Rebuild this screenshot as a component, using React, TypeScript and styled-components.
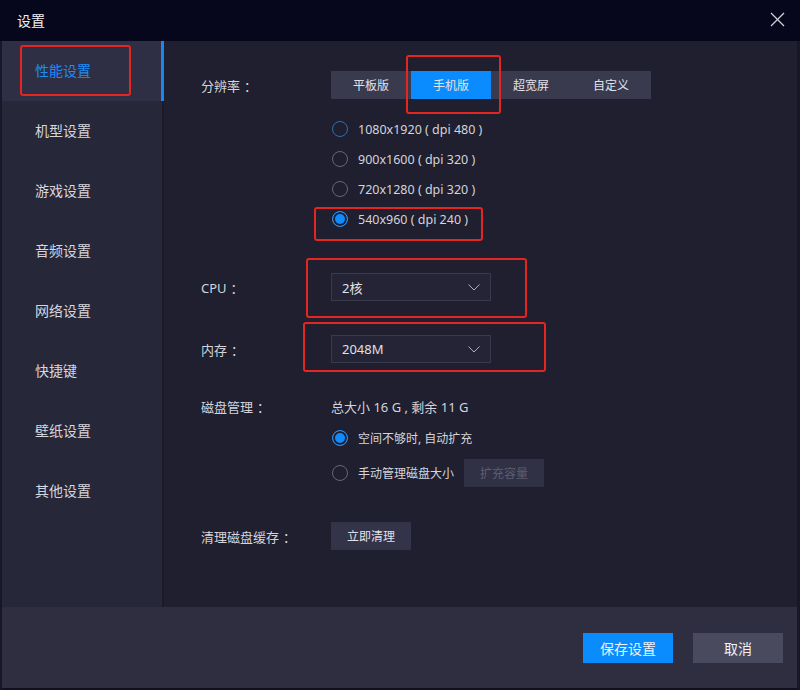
import React, { useState } from 'react';
import styled, { createGlobalStyle } from 'styled-components';

const GlobalStyle = createGlobalStyle`
  html, body {
    margin: 0;
    padding: 0;
    background: #06061c;
  }
  * {
    box-sizing: border-box;
  }
  body {
    font-family: "Noto Sans", "Noto Sans CJK SC", sans-serif;
  }
`;

const Window = styled.div`
  position: relative;
  width: 800px;
  height: 690px;
  display: flex;
  flex-direction: column;
  background: #06061c;
  overflow: hidden;
`;

const TitleBar = styled.div`
  height: 41px;
  flex: none;
  display: flex;
  align-items: center;
  justify-content: space-between;
  padding: 0 14px 2px 17px;
  color: #f0f0f4;
  font-size: 14px;
`;

const CloseButton = styled.button`
  width: 18px;
  height: 18px;
  padding: 0;
  border: none;
  background: transparent;
  display: flex;
  align-items: center;
  justify-content: center;
  cursor: pointer;
`;

const Body = styled.div`
  flex: 1;
  display: flex;
  min-height: 0;
  border-left: 2px solid #17172a;
  border-right: 3px solid #17172a;
`;

const Sidebar = styled.nav`
  width: 162px;
  flex: none;
  display: flex;
  flex-direction: column;
  background: #27273a;
  border-right: 2px solid #1a1a2a;
`;

const NavItem = styled.div<{ $active?: boolean }>`
  height: 60px;
  display: flex;
  align-items: center;
  padding: 0 0 3px 33px;
  font-size: 14px;
  margin-right: ${(p) => (p.$active ? '-2px' : '0')};
  color: ${(p) => (p.$active ? '#1d8cf8' : '#d6d6de')};
  background: ${(p) => (p.$active ? '#2e2e44' : 'transparent')};
  border-right: 3px solid ${(p) => (p.$active ? '#1a86f0' : 'transparent')};
  cursor: pointer;
`;

const Main = styled.main`
  flex: 1;
  background: #1f1f2f;
  padding: 30px 0 0 37px;
  display: flex;
  flex-direction: column;
  color: #d4d4dc;
  font-size: 13px;
`;

const Row = styled.div<{ $top?: number; $height?: number }>`
  display: flex;
  align-items: center;
  margin-top: ${(p) => p.$top ?? 0}px;
  min-height: ${(p) => p.$height ?? 28}px;
`;

const Label = styled.div`
  width: 130px;
  flex: none;
  font-size: 13px;
  color: #d4d4dc;
`;

const Colon = styled.span`
  margin-left: 4px;
`;

const Indent = styled.div`
  width: 130px;
  flex: none;
`;

const Segmented = styled.div`
  display: flex;
  height: 28px;
  background: #3a3a4e;
`;

const Segment = styled.button<{ $active?: boolean }>`
  width: 80px;
  height: 28px;
  border: none;
  padding: 0;
  font-family: inherit;
  font-size: 12px;
  color: #e2e2ea;
  background: ${(p) => (p.$active ? '#0a8cff' : 'transparent')};
  cursor: pointer;
`;

const RadioList = styled.div`
  display: flex;
  flex-direction: column;
  margin-top: 15px;
`;

const RadioRow = styled.label`
  display: flex;
  align-items: center;
  height: 30px;
  font-size: 12.5px;
  color: #d4d4dc;
  cursor: pointer;
`;

const RadioDot = styled.span<{ $checked?: boolean; $focus?: boolean }>`
  width: 16px;
  height: 16px;
  margin: 0 10px 0 1px;
  border-radius: 50%;
  flex: none;
  border: 1px solid
    ${(p) => (p.$checked ? '#2a90f4' : p.$focus ? '#2f6fae' : '#66667a')};
  background: ${(p) => (p.$checked ? '#0f8bff' : 'transparent')};
  box-shadow: ${(p) => (p.$checked ? 'inset 0 0 0 2px #1f1f2f' : 'none')};
`;

const CjkText = styled.span`
  font-size: 12px;
`;

const Select = styled.div`
  width: 160px;
  height: 28px;
  display: flex;
  align-items: center;
  justify-content: space-between;
  padding: 0 10px 0 10px;
  background: #242436;
  border: 1px solid #39394c;
  font-size: 13px;
  color: #e0e0e8;
`;

const Info = styled.div`
  font-size: 13px;
  color: #d4d4dc;
`;

const GhostButton = styled.button<{ $disabled?: boolean }>`
  width: 80px;
  height: 28px;
  margin-left: ${(p) => (p.$disabled ? '10px' : '0')};
  border: none;
  padding: 0;
  font-family: inherit;
  font-size: 12px;
  background: ${(p) => (p.$disabled ? '#313145' : '#333349')};
  color: ${(p) => (p.$disabled ? '#5e5e72' : '#e0e0e8')};
  cursor: ${(p) => (p.$disabled ? 'default' : 'pointer')};
`;

const Footer = styled.footer`
  height: 83px;
  flex: none;
  display: flex;
  align-items: center;
  justify-content: flex-end;
  gap: 20px;
  padding: 0 14px 0 0;
  background: #2e2e40;
  border-left: 2px solid #17172a;
  border-right: 3px solid #17172a;
  border-bottom: 2px solid #101020;
`;

const FooterButton = styled.button<{ $primary?: boolean }>`
  width: 90px;
  height: 30px;
  border: none;
  font-family: inherit;
  font-size: 14px;
  color: #f0f0f6;
  background: ${(p) => (p.$primary ? '#0a8cff' : '#4a4a5e')};
  cursor: pointer;
`;

const Mark = styled.div<{ $x: number; $y: number; $w: number; $h: number }>`
  position: absolute;
  left: ${(p) => p.$x}px;
  top: ${(p) => p.$y}px;
  width: ${(p) => p.$w}px;
  height: ${(p) => p.$h}px;
  border: 2px solid #e5251f;
  border-radius: 3px;
  pointer-events: none;
`;

const Chevron = () => (
  <svg width="12" height="7" viewBox="0 0 12 7">
    <polyline points="0.5,0.5 6,6 11.5,0.5" fill="none" stroke="#b0b0bc" strokeWidth="1" />
  </svg>
);

const CloseIcon = () => (
  <svg width="15" height="15" viewBox="0 0 15 15">
    <line x1="1" y1="1" x2="14" y2="14" stroke="#d0d0d8" strokeWidth="1.2" />
    <line x1="14" y1="1" x2="1" y2="14" stroke="#d0d0d8" strokeWidth="1.2" />
  </svg>
);

const navItems = ['性能设置', '机型设置', '游戏设置', '音频设置', '网络设置', '快捷键', '壁纸设置', '其他设置'];
const modes = ['平板版', '手机版', '超宽屏', '自定义'];
const resolutions = [
  '1080x1920 ( dpi 480 )',
  '900x1600 ( dpi 320 )',
  '720x1280 ( dpi 320 )',
  '540x960 ( dpi 240 )',
];

const App: React.FC = () => {
  const [mode, setMode] = useState(1);
  const [resolution, setResolution] = useState(3);
  const [auto, setAuto] = useState(true);

  return (
    <>
      <GlobalStyle />
      <Window>
        <TitleBar>
          <span>设置</span>
          <CloseButton>
            <CloseIcon />
          </CloseButton>
        </TitleBar>
        <Body>
          <Sidebar>
            {navItems.map((item, i) => (
              <NavItem key={item} $active={i === 0}>
                {item}
              </NavItem>
            ))}
          </Sidebar>
          <Main>
            <Row>
              <Label>
                分辨率<Colon>：</Colon>
              </Label>
              <Segmented>
                {modes.map((m, i) => (
                  <Segment key={m} $active={i === mode} onClick={() => setMode(i)}>
                    {m}
                  </Segment>
                ))}
              </Segmented>
            </Row>
            <RadioList>
              {resolutions.map((r, i) => (
                <Row key={r} $height={30}>
                  <Indent />
                  <RadioRow onClick={() => setResolution(i)}>
                    <RadioDot $checked={i === resolution} $focus={i === 0} />
                    {r}
                  </RadioRow>
                </Row>
              ))}
            </RadioList>
            <Row $top={39}>
              <Label>
                CPU<Colon>：</Colon>
              </Label>
              <Select>
                <span>2核</span>
                <Chevron />
              </Select>
            </Row>
            <Row $top={34}>
              <Label>
                内存<Colon>：</Colon>
              </Label>
              <Select>
                <span>2048M</span>
                <Chevron />
              </Select>
            </Row>
            <Row $top={33} $height={20}>
              <Label>
                磁盘管理<Colon>：</Colon>
              </Label>
              <Info>总大小 16 G , 剩余 11 G</Info>
            </Row>
            <Row $top={7} $height={30}>
              <Indent />
              <RadioRow onClick={() => setAuto(true)}>
                <RadioDot $checked={auto} />
                <CjkText>空间不够时, 自动扩充</CjkText>
              </RadioRow>
            </Row>
            <Row $top={5} $height={30}>
              <Indent />
              <RadioRow onClick={() => setAuto(false)}>
                <RadioDot $checked={!auto} />
                <CjkText>手动管理磁盘大小</CjkText>
              </RadioRow>
              <GhostButton $disabled>扩充容量</GhostButton>
            </Row>
            <Row $top={34}>
              <Label>
                清理磁盘缓存<Colon>：</Colon>
              </Label>
              <GhostButton>立即清理</GhostButton>
            </Row>
          </Main>
        </Body>
        <Footer>
          <FooterButton $primary>保存设置</FooterButton>
          <FooterButton>取消</FooterButton>
        </Footer>

        <Mark $x={20} $y={45} $w={111} $h={51} />
        <Mark $x={406} $y={55} $w={95} $h={59} />
        <Mark $x={314} $y={207} $w={169} $h={34} />
        <Mark $x={306} $y={258} $w={221} $h={60} />
        <Mark $x={303} $y={322} $w={243} $h={50} />
      </Window>
    </>
  );
};

export default App;
